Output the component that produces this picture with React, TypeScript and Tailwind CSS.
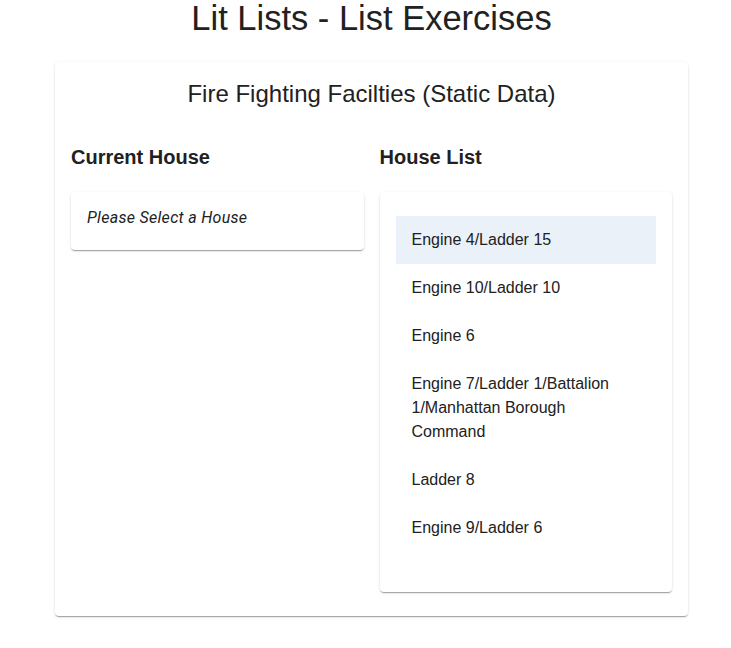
const houses = [
  'Engine 4/Ladder 15',
  'Engine 10/Ladder 10',
  'Engine 6',
  'Engine 7/Ladder 1/Battalion 1/Manhattan Borough Command',
  'Ladder 8',
  'Engine 9/Ladder 6',
];

const paper =
  'bg-white rounded shadow-[0_2px_1px_-1px_rgba(0,0,0,0.2),0_1px_1px_0_rgba(0,0,0,0.14),0_1px_3px_0_rgba(0,0,0,0.12)]';

export default function App() {
  const selected = 0;

  return (
    <div className="min-h-screen bg-white pl-3 text-[#212121] font-['Liberation_Sans',Arial,sans-serif]">
      <h1 className="text-center text-[34.5px] leading-[37px] m-0">Lit Lists - List Exercises</h1>

      <div className={`${paper} mx-[43px] mt-[25px] px-4 pb-6`}>
        <h2 className="text-center text-2xl leading-[28px] pt-[18px] pb-[37px]">Fire Fighting Facilties (Static Data)</h2>

        <div className="grid grid-cols-2 gap-4">
          {/* Current House */}
          <div>
            <h3 className="font-bold text-xl leading-6 mb-[23px]">Current House</h3>
            <div className={`${paper} px-4 pt-[14px] pb-[20px]`}>
              <p className="font-['Roboto',sans-serif] italic text-base leading-6 tracking-[0.3px]">Please Select a House</p>
            </div>
          </div>

          {/* House List */}
          <div>
            <h3 className="font-bold text-xl leading-6 mb-[23px]">House List</h3>
            <ul className={`${paper} px-4 pt-6 pb-10`}>
              {houses.map((h, i) => (
                <li
                  key={h}
                  className={`px-4 py-3 text-base leading-6 ${i === selected ? 'bg-[#eaf1f9]' : ''}`}
                >
                  {h}
                </li>
              ))}
            </ul>
          </div>
        </div>
      </div>
    </div>
  );
}
